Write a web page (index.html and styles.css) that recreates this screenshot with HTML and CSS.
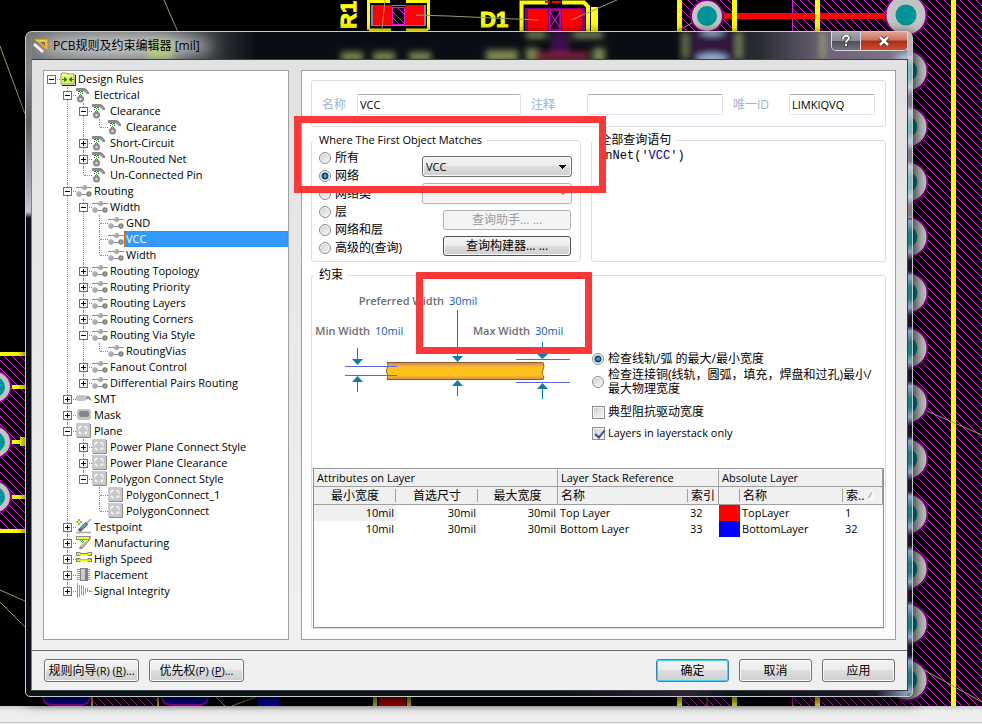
FILE: index.html
```html
<!DOCTYPE html>
<html lang="zh-CN">
<head>
<meta charset="utf-8">
<title>PCB规则及约束编辑器 [mil]</title>
<link rel="stylesheet" href="styles.css">
</head>
<body>
<svg class="sprite" aria-hidden="true">
  <symbol id="i-rules" viewBox="0 0 16 16">
    <path d="M1 13V3l1-1h4l1 1h7v10z" fill="#ffff88" stroke="#909070"/>
    <path d="M2 14.5h13.5V4" fill="none" stroke="#202020"/>
    <path d="M2 5h11v7H2z" fill="#eeee58"/>
    <path d="M2 8.500h3M4.500 6.500l2.500 2-2.500 2zM14 8.500h-3M11.500 6.500l-2.500 2 2.500 2z" fill="#0a7a0a" stroke="#0a7a0a" stroke-width=".8"/>
  </symbol>
  <symbol id="i-elec" viewBox="0 0 16 16">
    <path d="M0 1h9l4 4v2h-2L8 4H0z" fill="#8a8a8a"/>
    <path d="M3 4h1v1H3zM5 4h1v1H5zM4 5h1v1H4zM2 6h1v1H2zM6 6h1v1H6zM4 7h1v1H4zM3 8h1v1H3zM5 8h1v1H5zM2 4h1v1H2zM6 4h1v1H6z" fill="#109010"/>
    <circle cx="4.500" cy="12" r="2.500" fill="#d0d0d0" stroke="#888" stroke-width="2"/>
  </symbol>
  <symbol id="i-route" viewBox="0 0 16 16">
    <path d="M0 4.500h16M3 11.500h10" stroke="#909090"/>
    <circle cx="8.500" cy="4.500" r="2.500" fill="#a8a8a8"/>
    <circle cx="3" cy="11" r="2.700" fill="#a8a8a8"/>
    <circle cx="13" cy="11" r="2.700" fill="#858585"/>
    <path d="M7 3h1v1H7zM2 9.500h1v1H2zM12.500 10.500h1v1h-1z" fill="#eee"/>
  </symbol>
  <symbol id="i-smt" viewBox="0 0 16 16">
    <path d="M9 6c2-2 4-1 5 0l2 4-4-2-3 1z" fill="#999"/>
    <rect x="0" y="4" width="10" height="6" rx="2.500" fill="#c4c4c4"/>
  </symbol>
  <symbol id="i-mask" viewBox="0 0 16 16">
    <rect x="1" y="2" width="14" height="11" rx="3" fill="#c4c4c4"/>
    <rect x="3" y="4" width="10" height="6" rx="2" fill="#858585"/>
  </symbol>
  <symbol id="i-plane" viewBox="0 0 16 16">
    <path d="M1 1h14v14H1z" fill="#8c8c8c"/>
    <path d="M0 0h14v14H0z" fill="#c8c8c8"/>
    <path d="M5.500 3.500h-1l-1 1v1M8.500 3.500h1l1 1v1M3.500 8.500v1l1 1h1M10.500 8.500v1l-1 1h-1" fill="none" stroke="#fff" stroke-width="1.500"/>
    <path d="M2 6.500h1M11 6.500h1" stroke="#fff"/>
  </symbol>
  <symbol id="i-test" viewBox="0 0 16 16">
    <path d="M3 0v6M0 3h6" stroke="#108010"/><path d="M2 2h2v2H2z" fill="#ff0"/>
    <path d="M3 12L11 4" stroke="#606060" stroke-width="3.500"/>
    <path d="M5 9.500L10 4.500" stroke="#30c8e0" stroke-width="1.500"/>
    <path d="M11 4l4-4M0 13.500h15" stroke="#a8a8a8" stroke-width="1.500"/>
  </symbol>
  <symbol id="i-manu" viewBox="0 0 16 16">
    <path d="M0 1h15l-1 4L6 14H3l1-3 7-6H0z" fill="#8c8c8c"/>
    <path d="M1 2h12v2H1z" fill="#ff0"/><path d="M12 5L5 12" stroke="#e8e060" stroke-width="1.500"/>
    <path d="M4 5h1v1H4zM6 5h1v1H6zM5 6h1v1H5zM7 6h1v1H7zM6 7h1v1H6z" fill="#20c020"/>
  </symbol>
  <symbol id="i-speed" viewBox="0 0 16 16">
    <path d="M0 1h4l1 1h6l1-1h4v4h-4l-1-1H5L4 5H0zM0 7h4l1 1h6l1-1h4v4h-4l-1-1H5l-1 1H0z" fill="#858585"/>
    <path d="M1 2h3v1h8V2h3v2H1zM1 8.500h14v1.500H1z" fill="#f4f400"/>
  </symbol>
  <symbol id="i-place" viewBox="0 0 16 16">
    <path d="M1 2.500h13M1 4.500h13M1 6.500h13M1 8.500h13M1 10.500h13M1 12.500h13" stroke="#999"/>
    <path d="M4 1h8v13H4z" fill="#808080"/><path d="M5 2h4v11H5z" fill="#ccc"/>
  </symbol>
  <symbol id="i-signal" viewBox="0 0 16 16">
    <path d="M1.500 0v15M3.500 2v12M5.500 2v10M7.500 3v10M9.500 5v6M11.500 5v4M13.500 7v2M14 8.500h2" stroke="#999"/>
  </symbol>
</svg>

<div class="workspace">
  <svg class="board" viewBox="0 0 982 706" preserveAspectRatio="xMinYMin slice" aria-hidden="true">
    <defs>
      <pattern id="hatch" width="8" height="8" patternUnits="userSpaceOnUse">
        <path d="M-1-1L9 9M7-1L9 1M-1 7L1 9" stroke="#e818e8"/>
      </pattern>
      <g id="pad"><circle r="20.500" fill="#c3c3c3" stroke="#800080" stroke-width="2"/><circle r="10.500" fill="#009494"/></g>
      <g id="pad-s"><circle r="16" fill="#c3c3c3" stroke="#800080" stroke-width="2"/><circle r="10" fill="#009494"/></g>
    </defs>
    <path d="M682 0h50v706h-50zM793 0h189v706H793zM0 356h60v174H0zM92 690h66v16H92z" fill="url(#hatch)"/>
    <path d="M792.500 0v706" stroke="#e818e8"/>
    <path d="M723 13h165v6H723z" fill="#f00"/>
    <path d="M677 0h5v706h-5zM732 0h5v706h-5zM815 0h5v706h-5zM951 0h5v706h-5zM0 352h40v4H0zM0 529h40v4H0zM5 385h35v4H5zM5 440h35v4H5zM5 495h35v4H5zM20 437h20v9H20z" fill="#ff0"/>
    <use href="#pad-s" x="707" y="16"/>
    <use href="#pad" x="906" y="15"/><use href="#pad" x="907" y="71"/><use href="#pad" x="907" y="127"/>
    <use href="#pad" x="907" y="182"/><use href="#pad" x="907" y="237"/><use href="#pad" x="907" y="293"/>
    <use href="#pad" x="907" y="348"/><use href="#pad" x="907" y="403"/><use href="#pad" x="907" y="459"/>
    <use href="#pad" x="907" y="514"/><use href="#pad" x="907" y="569"/><use href="#pad" x="907" y="624"/>
    <use href="#pad" x="907" y="680"/>
    <use href="#pad-s" x="-5" y="387"/><use href="#pad-s" x="-5" y="442"/><use href="#pad-s" x="-5" y="497"/>
    <path d="M368.500 30V1.500H390M406 1.500h22.500V30M391 30h-22M406 30h22" fill="none" stroke="#ff0" stroke-width="3"/>
    <path d="M371 5h55v21h-55z" fill="#888"/>
    <path d="M373 5h19v20h-19zM405 5h19v20h-19z" fill="#f00"/>
    <path d="M392 6h13v19h-13z" fill="#000"/><path d="M392.500 7.500h12v17h-12zM393 12l12 12M393 18l7 7M397 7l8 8" fill="none" stroke="#e818e8"/>
    <path d="M521.500 31V2.500H548M562 2.500h22l4 4V31" fill="none" stroke="#ff0" stroke-width="4"/>
    <path d="M591 7h7v24h-7z" fill="#ff0"/>
    <path d="M525 8h60v23h-60z" fill="#800080"/><path d="M528 9h20v22h-20zM562 9h20v22h-20zM545 1h5v2h-5zM552 1h9v2h-9z" fill="#f00"/>
    <path d="M550 10h10v20h-10zM550 12l10 16M560 12l-10 16" fill="#200020" stroke="#e818e8"/>
    <text x="480" y="27" class="silk">D1</text>
    <text transform="translate(356 29) rotate(-90)" class="silk">R1</text>
    <path d="M164 0l14 32M0 46l25 68M385 0l-3 30M416 15l32 1 90 4M571 20l46-20M679 30l13-7M927 411l55 24M0 590l25 11M0 602l26 26M924 670l58 32M216 697l9 9M232 706l26-10M707 696v10" fill="none" stroke="#9a9a72"/>
    <path d="M43 690h47v6c0 6-4 9-9 9H53c-6 0-10-3-10-9zM162 690h46v6c0 6-4 9-9 9h-27c-6 0-10-3-10-9z" fill="#0000a8" stroke="#b000b0" stroke-width="2"/>
    <path d="M258 690h22v16h-22z" fill="#0000b8"/><path d="M379 690h27v16h-27z" fill="#b80000"/>
    <path d="M373 690h4v16h-4zM407 690h4v16h-4zM91 690h2v16h-2zM157 690h2v16h-2z" fill="#bcbc00"/>
  </svg>

  <main class="window">
    <header class="titlebar">
      <svg class="glass" viewBox="0 0 886 27" preserveAspectRatio="xMinYMin slice" aria-hidden="true">
        <filter id="soft"><feGaussianBlur stdDeviation="3"/></filter>
        <filter id="wide"><feGaussianBlur stdDeviation="8"/></filter>
        <ellipse cx="95" cy="14" rx="88" ry="11" fill="#fff" opacity=".65" filter="url(#wide)"/>
        <g filter="url(#soft)">
          <path d="M116 8h26v19h-26z" fill="#b8d070" opacity=".7"/>
          <path d="M310 20h22v9h-22zM342 20h22v9h-22zM378 20h22v9h-22zM455 18h32v12h-32zM495 16h12v14h-12zM562 16h12v14h-12z" fill="#9aa860" opacity=".8"/>
          <path d="M495 0h20v6h-20zM542 0h30v6h-30zM651 0h5v27h-5zM706 0h5v27h-5zM789 0h5v27h-5z" fill="#a2b070" opacity=".8"/>
          <path d="M503 20h55v8h-55z" fill="#80203c"/><path d="M520 0h18v20h-18z" fill="#4a1458" opacity=".8"/>
          <path d="M659 0h45v27h-45z" fill="#30183c"/><ellipse cx="681" cy="27" rx="16" ry="5" fill="#9fb4d8"/>
          <ellipse cx="681" cy="0" rx="12" ry="3" fill="#9fb4d8"/><ellipse cx="884" cy="27" rx="20" ry="6" fill="#a8c8e0"/>
        </g>
      </svg>
      <svg class="app-icon" viewBox="0 0 16 16" aria-hidden="true">
        <path d="M1 1h14v12z" fill="#f4bc30" stroke="#c08818"/><path d="M7 4h5v4z" fill="#707070"/>
        <path d="M1 6l9 8" stroke="#f4f4f4" stroke-width="3"/><path d="M3 2.500h10" stroke="#ffe070" stroke-dasharray="1 1"/>
      </svg>
      <h1>PCB规则及约束编辑器 [mil]</h1>
      <div class="caption">
        <button class="help" type="button" aria-label="Help"><svg viewBox="0 0 12 12"><path d="M3 4c0-4 6-4 6-1 0 2-3 2-3 4.500M6 9v2.500" fill="none" stroke="#333" stroke-width="3.500"/><path d="M3 4c0-4 6-4 6-1 0 2-3 2-3 4.500M6 9v2" fill="none" stroke="#fff" stroke-width="2"/></svg></button>
        <button class="close" type="button" aria-label="Close"><svg viewBox="0 0 12 12"><path d="M2 2l8 8M10 2l-8 8" stroke="#5a2a2a" stroke-width="4.500"/><path d="M2 2l8 8M10 2l-8 8" stroke="#fff" stroke-width="2.500"/></svg></button>
      </div>
    </header>

    <div class="client">
      <div class="content">
        <nav class="tree">
          <ul>
            <li><div class="node"><i class="box minus"></i><svg><use href="#i-rules"/></svg><span>Design Rules</span></div>
              <ul>
                <li><div class="node"><i class="box minus"></i><svg><use href="#i-elec"/></svg><span>Electrical</span></div>
                  <ul>
                    <li><div class="node"><i class="box minus"></i><svg><use href="#i-elec"/></svg><span>Clearance</span></div>
                      <ul><li><div class="node"><svg><use href="#i-elec"/></svg><span>Clearance</span></div></li></ul></li>
                    <li><div class="node"><i class="box plus"></i><svg><use href="#i-elec"/></svg><span>Short-Circuit</span></div></li>
                    <li><div class="node"><i class="box plus"></i><svg><use href="#i-elec"/></svg><span>Un-Routed Net</span></div></li>
                    <li><div class="node"><svg><use href="#i-elec"/></svg><span>Un-Connected Pin</span></div></li>
                  </ul></li>
                <li><div class="node"><i class="box minus"></i><svg><use href="#i-route"/></svg><span>Routing</span></div>
                  <ul>
                    <li><div class="node"><i class="box minus"></i><svg><use href="#i-route"/></svg><span>Width</span></div>
                      <ul>
                        <li><div class="node"><svg><use href="#i-route"/></svg><span>GND</span></div></li>
                        <li><div class="node"><svg><use href="#i-route"/></svg><span class="selected">VCC</span></div></li>
                        <li><div class="node"><svg><use href="#i-route"/></svg><span>Width</span></div></li>
                      </ul></li>
                    <li><div class="node"><i class="box plus"></i><svg><use href="#i-route"/></svg><span>Routing Topology</span></div></li>
                    <li><div class="node"><i class="box plus"></i><svg><use href="#i-route"/></svg><span>Routing Priority</span></div></li>
                    <li><div class="node"><i class="box plus"></i><svg><use href="#i-route"/></svg><span>Routing Layers</span></div></li>
                    <li><div class="node"><i class="box plus"></i><svg><use href="#i-route"/></svg><span>Routing Corners</span></div></li>
                    <li><div class="node"><i class="box minus"></i><svg><use href="#i-route"/></svg><span>Routing Via Style</span></div>
                      <ul><li><div class="node"><svg><use href="#i-route"/></svg><span>RoutingVias</span></div></li></ul></li>
                    <li><div class="node"><i class="box plus"></i><svg><use href="#i-route"/></svg><span>Fanout Control</span></div></li>
                    <li><div class="node"><i class="box plus"></i><svg><use href="#i-route"/></svg><span>Differential Pairs Routing</span></div></li>
                  </ul></li>
                <li><div class="node"><i class="box plus"></i><svg><use href="#i-smt"/></svg><span>SMT</span></div></li>
                <li><div class="node"><i class="box plus"></i><svg><use href="#i-mask"/></svg><span>Mask</span></div></li>
                <li><div class="node"><i class="box minus"></i><svg><use href="#i-plane"/></svg><span>Plane</span></div>
                  <ul>
                    <li><div class="node"><i class="box plus"></i><svg><use href="#i-plane"/></svg><span>Power Plane Connect Style</span></div></li>
                    <li><div class="node"><i class="box plus"></i><svg><use href="#i-plane"/></svg><span>Power Plane Clearance</span></div></li>
                    <li><div class="node"><i class="box minus"></i><svg><use href="#i-plane"/></svg><span>Polygon Connect Style</span></div>
                      <ul>
                        <li><div class="node"><svg><use href="#i-plane"/></svg><span>PolygonConnect_1</span></div></li>
                        <li><div class="node"><svg><use href="#i-plane"/></svg><span>PolygonConnect</span></div></li>
                      </ul></li>
                  </ul></li>
                <li><div class="node"><i class="box plus"></i><svg><use href="#i-test"/></svg><span>Testpoint</span></div></li>
                <li><div class="node"><i class="box plus"></i><svg><use href="#i-manu"/></svg><span>Manufacturing</span></div></li>
                <li><div class="node"><i class="box plus"></i><svg><use href="#i-speed"/></svg><span>High Speed</span></div></li>
                <li><div class="node"><i class="box plus"></i><svg><use href="#i-place"/></svg><span>Placement</span></div></li>
                <li><div class="node"><i class="box plus"></i><svg><use href="#i-signal"/></svg><span>Signal Integrity</span></div></li>
              </ul></li>
          </ul>
        </nav>

        <form class="rule">
          <div class="identity">
            <label for="name">名称</label><input id="name" type="text" value="VCC">
            <label for="note">注释</label><input id="note" type="text">
            <label for="uid">唯一ID</label><input id="uid" type="text" value="LIMKIQVQ">
          </div>

          <div class="scope">
            <fieldset class="where">
              <legend>Where The First Object Matches</legend>
              <div class="where-body">
                <div class="options">
                  <label><input type="radio" name="scope">所有</label>
                  <label><input type="radio" name="scope" checked>网络</label>
                  <label><input type="radio" name="scope">网络类</label>
                  <label><input type="radio" name="scope">层</label>
                  <label><input type="radio" name="scope">网络和层</label>
                  <label><input type="radio" name="scope">高级的(查询)</label>
                </div>
                <div class="pickers">
                  <select aria-label="网络"><option>VCC</option></select>
                  <select aria-label="网络类" disabled><option></option></select>
                  <button type="button" disabled>查询助手... ...</button>
                  <button type="button" class="dark">查询构建器... ...</button>
                </div>
              </div>
              <div class="mark mark-net"></div>
            </fieldset>
            <fieldset class="query">
              <legend class="cjk">全部查询语句</legend>
              <code>InNet(<span>'VCC'</span>)</code>
            </fieldset>
          </div>

          <fieldset class="constraints">
            <legend class="cjk">约束</legend>
            <div class="upper">
              <svg class="diagram" viewBox="313 282 279 186" role="img" aria-label="Track width">
                <defs><linearGradient id="copper" x2="0" y2="1"><stop offset="0" stop-color="#d98b50"/><stop offset=".12" stop-color="#e29a50"/><stop offset=".3" stop-color="#ffc21c"/><stop offset=".75" stop-color="#ffc21c"/><stop offset="1" stop-color="#d98b50"/></linearGradient></defs>
                <path d="M387 362.500h156q2 4 0 7 -2 3 0 6 2 2 0 4H387q2-4 0-6 -1-3 0-5 2-3 0-6z" fill="url(#copper)" stroke="#8c5a24"/>
                <path d="M345 366.500h52M345 375.500h52M516 359.500h54M516 382.500h54" stroke="#5868d8"/>
                <path d="M357.500 348v12M357.500 380v12M457.500 310v48M457.500 384v12M542.500 342v10M542.500 387v12" stroke="#0880b0"/>
                <path d="M352 359h11l-5.500 6zM352 382h11l-5.500-6zM452 356h11l-5.500 6zM452 386h11l-5.500-6zM537 354h11l-5.500 5zM537 389h11l-5.500-6z" fill="#0880b0"/>
                <text x="444" y="305" class="cap">Preferred Width</text><text x="449" y="305" class="val">30mil</text>
                <text x="370" y="335" class="cap">Min Width</text><text x="375" y="335" class="val">10mil</text>
                <text x="530" y="335" class="cap">Max Width</text><text x="535" y="335" class="val">30mil</text>
              </svg>
              <div class="checks">
                <label><input type="radio" name="mode" checked>检查线轨/弧 的最大/最小宽度</label>
                <label class="two"><input type="radio" name="mode"><span>检查连接铜(线轨，圆弧，填充，焊盘和过孔)最小/<br>最大物理宽度</span></label>
                <label class="spaced"><input type="checkbox">典型阻抗驱动宽度</label>
                <label class="latin"><input type="checkbox" checked>Layers in layerstack only</label>
              </div>
            </div>
            <div class="grid">
              <table>
                <colgroup><col class="w82"><col class="w82"><col class="w80"><col class="w130"><col class="w31"><col class="w21"><col class="w103"><col></colgroup>
                <thead>
                  <tr class="groups"><th colspan="3">Attributes on Layer</th><th colspan="2">Layer Stack Reference</th><th colspan="3">Absolute Layer</th></tr>
                  <tr class="fields"><th class="c">最小宽度</th><th class="c">首选尺寸</th><th class="c edge">最大宽度</th><th>名称</th><th class="edge">索引</th><th></th><th>名称</th><th class="last">索.. <svg class="sort" viewBox="0 0 8 8"><path d="M1 7L5 0" stroke="#999"/><path d="M5 0l2 7H1" fill="none" stroke="#fff"/></svg></th></tr>
                </thead>
                <tbody>
                  <tr><td class="n current">10mil</td><td class="n">30mil</td><td class="n">30mil</td><td>Top Layer</td><td>32</td><td class="red"></td><td>TopLayer</td><td>1</td></tr>
                  <tr><td class="n">10mil</td><td class="n">30mil</td><td class="n">30mil</td><td>Bottom Layer</td><td>33</td><td class="blue"></td><td>BottomLayer</td><td>32</td></tr>
                </tbody>
              </table>
            </div>
            <div class="mark mark-width"></div>
          </fieldset>
        </form>
      </div>

      <footer class="actions">
        <button type="button" class="wide">规则向导<span>(R) (<u>R</u>)...</span></button>
        <button type="button" class="wide">优先权<span>(P) (<u>P</u>)...</span></button>
        <i class="fill"></i>
        <button type="button" class="default">确定</button>
        <button type="button">取消</button>
        <button type="button">应用</button>
      </footer>
    </div>
  </main>
</div>
<div class="taskbar"></div>
</body>
</html>
```

FILE: styles.css
```css
* { box-sizing: border-box; }
body {
  margin: 0;
  min-height: 100vh;
  display: flex;
  flex-direction: column;
  font: 11px/16px "Open Sans", "Noto Sans CJK SC", sans-serif;
  color: #000;
  background: #ececec;
}
ul { list-style: none; margin: 0; padding: 0; }
button, input, select { font: inherit; color: inherit; margin: 0; }
.sprite { position: absolute; width: 0; height: 0; }

.workspace {
  flex: 1;
  display: flex;
  position: relative;
  padding: 31px 69px 9px 25px;
  background: #000;
}
.board { position: absolute; left: 0; top: 0; width: 100%; height: 100%; }
.silk { font: bold 22px "Liberation Sans", sans-serif; fill: #ff0; stroke: #ff0; stroke-width: 1px; }
.taskbar {
  height: 18px;
  background: linear-gradient(#c8c8c8, #ececec 5px, #f0f0f0 16px, #c8c8c8 16px, #c8c8c8 17px, #f0f0f0 17px);
}

.window {
  flex: 1;
  position: relative;
  display: flex;
  flex-direction: column;
  padding: 0 4px 5px 5px;
  border: 1px solid #c4ccd0;
  border-radius: 7px 7px 5px 5px;
  background:
    linear-gradient(rgba(255,255,255,.45), rgba(255,255,255,.45)) right top / 5px 186px no-repeat,
    repeating-linear-gradient(#8ea6c4 0, #207c8c 12px, #207c8c 22px, #8ea6c4 31px, #1c1428 40px, #1c1428 50px, #8ea6c4 55px) right 24px / 5px 100% no-repeat,
    linear-gradient(#74777a, #85888a 40px, #5a5c60 90px, #c4c8cc 180px, #0c1014 186px) left top / 6px 100% no-repeat,
    linear-gradient(90deg, #0c1416 60%, #30203c 75%, #0c1416 80%, #241830 96%, #9ab4d0) bottom / 100% 6px no-repeat,
    linear-gradient(90deg, #74777a, #686b6e 15%, #0a0e14 26%, #0a0e14 74%, #2a2e34 83%, #6c6074 90%, #847a8c);
  box-shadow: 2px 4px 12px 2px rgba(0,0,0,.7);
}
.titlebar { position: relative; display: flex; align-items: center; height: 27px; padding-left: 2px; gap: 4px; }
.glass { position: absolute; left: 0; top: 0; width: 100%; height: 27px; }
.app-icon { position: relative; width: 16px; height: 16px; }
h1 { position: relative; margin: 0; flex: 1; font-size: 12px; font-weight: 400; line-height: 18px; }
.caption {
  position: relative;
  align-self: flex-start;
  display: flex;
  width: 77px;
  height: 19px;
  border: 1px solid #d8d8e0;
  border-top: 0;
  border-radius: 0 0 5px 5px;
  overflow: hidden;
}
.caption button { border: 0; border-radius: 0; box-shadow: none; padding: 0; display: grid; place-items: center; }
.caption svg { width: 12px; height: 12px; }
.caption .help { flex: 28; background: linear-gradient(#a8a4b0, #8c8896 50%, #504c5a 50%, #74707e); }
.caption .close { flex: 47; border-left: 1px solid #d8d8e0; background: linear-gradient(#e0a498, #d0705c 45%, #b02c10 50%, #c85030); }

.client {
  flex: 1;
  position: relative;
  display: flex;
  flex-direction: column;
  border: 1px solid #3c4046;
  border-left-color: #3c8ce0;
  background: linear-gradient(#e2e2e2, #f0f0f0 580px);
}
.content { flex: 1; display: flex; gap: 12px; padding: 10px 11px; border-bottom: 1px solid #6c6c6c; }

.tree { flex: 0 0 246px; border: 1px solid #a0a0a0; background: #fff; padding-left: 3px; }
.tree li { position: relative; }
.tree li li { padding-left: 16px; }
.node { position: relative; display: flex; align-items: center; height: 16px; padding-left: 13px; }
.node::before { content: ""; position: absolute; left: 5px; top: 8px; width: 8px; border-top: 1px dotted #888; }
.tree li li::before { content: ""; position: absolute; left: 20px; top: 0; bottom: 0; border-left: 1px dotted #888; }
.tree li li:last-child::before { bottom: auto; height: 8px; }
.node svg { position: relative; flex: none; width: 16px; height: 16px; }
.node span { flex: 1; padding-left: 2px; white-space: nowrap; }
.node .selected { color: #fff; background: #3399ff; outline: 1px dotted #c86414; outline-offset: -1px; }
.box {
  position: absolute;
  left: 0;
  top: 4px;
  z-index: 1;
  width: 9px;
  height: 9px;
  border: 1px solid #707070;
  background: linear-gradient(#000, #000) center / 5px 1px no-repeat, #fff;
}
.box.plus { background: linear-gradient(#000, #000) center / 5px 1px no-repeat, linear-gradient(#000, #000) center / 1px 5px no-repeat, #fff; }

.rule { flex: 1; min-width: 0; display: flex; flex-direction: column; gap: 6px; padding: 9px 9px 10px; border: 1px solid #a0a0a0; background: #fff; }
.identity {
  display: grid;
  grid-template-columns: 35px 164fr 66px 136fr 66px 86fr;
  align-items: center;
  padding: 13px 10px 11px;
  border: 1px solid #d5dfe5;
  border-radius: 3px;
}
.identity label { color: #9ab4d2; font-size: 12px; }
.identity input + label { padding-left: 10px; }
.identity input { width: 100%; min-width: 0; height: 21px; padding: 0 2px; border: 1px solid #e2e3ea; border-top-color: #abadb3; border-radius: 2px; outline: 0; background: #fff; }

fieldset { position: relative; min-width: 0; margin: 0; padding: 0 1px; border: 1px solid #d5dfe5; border-radius: 3px; }
legend { margin: 0; padding: 0 4px 0 6px; line-height: 14px; }
.cjk { font-size: 12px; }
.scope { display: flex; gap: 10px; }
.where { flex: 270; }
.query { flex: 295; }
.where-body { display: flex; padding: 2px 7px 4px 6px; }
.options { width: 103px; }
label { font-size: 12px; }
.options label, .checks label { display: flex; align-items: center; gap: 4px; height: 18px; white-space: nowrap; }
input[type=radio], input[type=checkbox] { appearance: none; flex: none; width: 12px; height: 12px; border: 1px solid #8e8f8f; background: linear-gradient(135deg, #c8ccd0, #fafafa); box-shadow: inset 0 0 0 1px #f4f4f4; }
input[type=radio] { border-radius: 50%; }
input[type=radio]:checked { background: radial-gradient(circle at 50% 50%, #58c0f0 0, #1470a8 2px, #0c3050 3px, #e8eef2 4px); }
input[type=checkbox] { width: 13px; height: 13px; }
input[type=checkbox]:checked::after { content: ""; display: block; width: 4px; height: 8px; margin-left: 4px; border: solid #3c4c98; border-width: 0 2px 2px 0; transform: rotate(40deg); }
.pickers { flex: 1; display: flex; flex-direction: column; gap: 6px; padding-top: 7px; }
.pickers select, button { border: 1px solid #707070; border-radius: 3px; background: linear-gradient(#f3f3f3, #ebebeb 50%, #dddddd 50%, #cfcfcf); box-shadow: inset 0 0 0 1px #f8f8f8; }
.pickers select {
  appearance: none;
  height: 21px;
  padding: 0 3px;
  background:
    linear-gradient(45deg, transparent 50%, #000 50%) right 8px top 8px / 4px 4px no-repeat,
    linear-gradient(315deg, transparent 50%, #000 50%) right 4px top 8px / 4px 4px no-repeat,
    linear-gradient(#f3f3f3, #ebebeb 50%, #dddddd 50%, #cfcfcf);
}
.pickers select:disabled {
  border-color: #adb2b5;
  opacity: 1;
  background:
    linear-gradient(45deg, transparent 50%, #aaa 50%) right 8px top 8px / 4px 4px no-repeat,
    linear-gradient(315deg, transparent 50%, #aaa 50%) right 4px top 8px / 4px 4px no-repeat,
    #f4f4f4;
}
.pickers button { height: 20px; margin-left: 21px; margin-right: 1px; padding: 0; font-size: 12px; line-height: 16px; }
.pickers button:disabled { color: #9a9a9a; border-color: #adb2b5; background: #f4f4f4; }
.pickers .dark { border-color: #505050; }
.query code { display: block; padding-left: 5px; font: 12px/18px "Liberation Mono", monospace; }
.query code span { color: #000080; }

.mark { position: absolute; z-index: 2; border: 7px solid #fc3838; pointer-events: none; }
.mark-net { left: -18px; top: -31px; width: 312px; height: 77px; }
.mark-width { left: 104px; top: -10px; width: 176px; height: 82px; }

.constraints { flex: 1; }
.upper { display: flex; height: 186px; }
.diagram { flex: none; width: 279px; height: 186px; overflow: visible; }
.cap { font-weight: 600; fill: #6e6e6e; text-anchor: end; }
.val { fill: #0a5cc8; }
.checks { padding-top: 68px; }
.checks .two { height: 28px; line-height: 14px; }
.checks .spaced { margin: 7px 0 3px; }
.checks .latin { font-size: 11px; }
.checks input[type=checkbox] { margin-right: -1px; }
.grid { height: 160px; border: 1px solid #909090; background: #fff; }
table { width: 100%; table-layout: fixed; border-collapse: separate; border-spacing: 0; }
.w82 { width: 82px; } .w80 { width: 80px; } .w130 { width: 130px; } .w31 { width: 31px; } .w21 { width: 21px; } .w103 { width: 103px; }
th, td { padding: 0 3px; font-weight: 400; text-align: left; white-space: nowrap; overflow: hidden; }
th { height: 18px; line-height: 17px; background: #f0f0f0; border-bottom: 1px solid #a0a0a0; }
.groups th { border-right: 1px solid #a0a0a0; border-top: 1px solid #fff; line-height: 16px; }
.fields th { font-size: 12px; background: linear-gradient(#a0a0a0, #a0a0a0) right 2px / 1px 13px no-repeat, #f0f0f0; }
.fields th.edge, .fields th.last { border-right: 1px solid #a0a0a0; background: #f0f0f0; }
.fields .c { text-align: center; }
.sort { width: 8px; height: 8px; }
td { height: 16px; line-height: 16px; padding-left: 2px; }
.n { text-align: right; padding-right: 2px; }
.current { background: #f0f0f0; }
.red { background: #f00; }
.blue { background: #00f; }

.actions { display: flex; gap: 10px; padding: 8px 12px; background: #f0f0f0; }
.actions button { width: 73px; height: 23px; padding: 0; font-size: 12px; line-height: 18px; white-space: nowrap; }
.actions .wide { width: 95px; }
.actions .wide span { font-size: 11px; }
.actions .fill { flex: 1; }
.actions .default { border-color: #2c88b8; box-shadow: inset 0 0 0 1px #48d0f8; }
```
